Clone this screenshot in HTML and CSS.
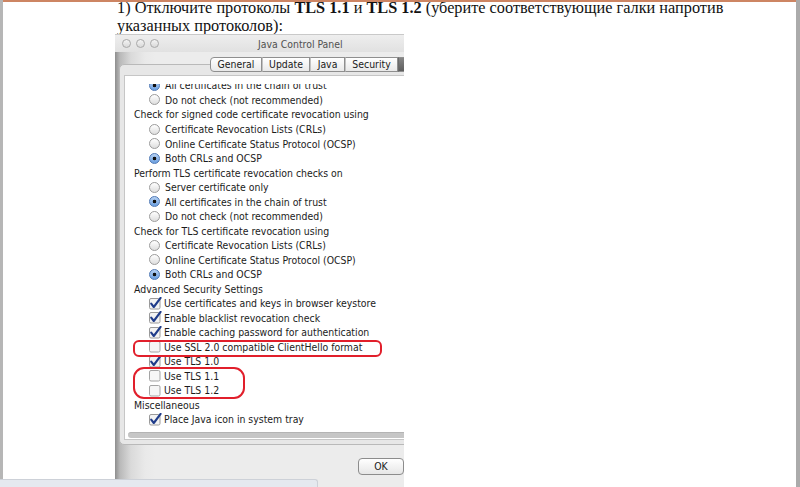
FILE: index.html
```html
<!DOCTYPE html>
<html lang="ru">
<head>
<meta charset="utf-8">
<title>Java Control Panel</title>
<link rel="stylesheet" href="styles.css">
</head>
<body>
<svg class="defs" width="0" height="0" aria-hidden="true">
  <symbol id="cb-on" viewBox="0 0 13 13">
    <rect x="0.5" y="1.5" width="10.5" height="10.5" rx="1.5" fill="#f3f3f3" stroke="#9a9a9a"/>
    <path d="M2.2 6.6 L4.8 10 L11.6 0.9" fill="none" stroke="#1f3c8a" stroke-width="2.1" stroke-linecap="round" stroke-linejoin="round"/>
  </symbol>
  <symbol id="cb-off" viewBox="0 0 13 13">
    <rect x="0.5" y="1.5" width="10.5" height="10.5" rx="1.5" fill="#f6f6f6" stroke="#a4a4a4"/>
  </symbol>
</svg>
<div class="frame">
  <p class="step">1) Отключите протоколы <b>TLS 1.1</b> и <b>TLS 1.2</b> (уберите соответствующие галки напротив указанных протоколов):</p>
  <div class="shot">
    <div class="titlebar">
      <span class="light"></span><span class="light"></span><span class="light"></span>
      <span class="wtitle">Java Control Panel</span>
    </div>
    <div class="tabs">
      <span class="tab t-general">General</span>
      <span class="tab t-update">Update</span>
      <span class="tab t-java">Java</span>
      <span class="tab t-security">Security</span>
      <span class="tab t-adv"></span>
    </div>
    <div class="panel">
      <div class="scroll">
        <div class="viewport">
          <div class="list">
            <div class="row opt"><span class="rb on"></span>All certificates in the chain of trust</div>
            <div class="row opt"><span class="rb"></span>Do not check (not recommended)</div>
            <div class="row hdr">Check for signed code certificate revocation using</div>
            <div class="row opt"><span class="rb"></span>Certificate Revocation Lists (CRLs)</div>
            <div class="row opt"><span class="rb"></span>Online Certificate Status Protocol (OCSP)</div>
            <div class="row opt"><span class="rb on"></span>Both CRLs and OCSP</div>
            <div class="row hdr">Perform TLS certificate revocation checks on</div>
            <div class="row opt"><span class="rb"></span>Server certificate only</div>
            <div class="row opt"><span class="rb on"></span>All certificates in the chain of trust</div>
            <div class="row opt"><span class="rb"></span>Do not check (not recommended)</div>
            <div class="row hdr">Check for TLS certificate revocation using</div>
            <div class="row opt"><span class="rb"></span>Certificate Revocation Lists (CRLs)</div>
            <div class="row opt"><span class="rb"></span>Online Certificate Status Protocol (OCSP)</div>
            <div class="row opt"><span class="rb on"></span>Both CRLs and OCSP</div>
            <div class="row hdr">Advanced Security Settings</div>
            <div class="row opt"><svg class="cb"><use href="#cb-on"/></svg>Use certificates and keys in browser keystore</div>
            <div class="row opt"><svg class="cb"><use href="#cb-on"/></svg>Enable blacklist revocation check</div>
            <div class="row opt"><svg class="cb"><use href="#cb-on"/></svg>Enable caching password for authentication</div>
            <div class="row opt"><svg class="cb"><use href="#cb-off"/></svg>Use SSL 2.0 compatible ClientHello format</div>
            <div class="row opt"><svg class="cb"><use href="#cb-on"/></svg>Use TLS 1.0</div>
            <div class="row opt"><svg class="cb"><use href="#cb-off"/></svg>Use TLS 1.1</div>
            <div class="row opt"><svg class="cb"><use href="#cb-off"/></svg>Use TLS 1.2</div>
            <div class="row hdr">Miscellaneous</div>
            <div class="row opt"><svg class="cb"><use href="#cb-on"/></svg>Place Java icon in system tray</div>
          </div>
        </div>
        <div class="hbar"></div>
      </div>
    </div>
    <div class="footer"><span class="okbtn">OK</span></div>
    <div class="mark mark-ssl"></div>
    <div class="mark mark-tls"></div>
  </div>
</div>
<div class="status"></div>
</body>
</html>
```
FILE: styles.css
```css
html, body {
  margin: 0;
  padding: 0;
  background: #ffffff;
}

.defs {
  position: absolute;
  width: 0;
  height: 0;
  overflow: hidden;
}

.frame {
  position: relative;
  width: 800px;
  height: 487px;
  box-sizing: border-box;
  border-left: 3px solid #b6b6b6;
  border-right: 4px solid #ababab;
  padding-left: 112px;
  overflow: hidden;
}

/* thin orange line along the top of the page (overlay) */
.frame::before {
  content: "";
  position: absolute;
  left: -3px;
  right: -4px;
  top: 0;
  height: 2px;
  background: #cd8563;
}

.step {
  margin: -1.5px 0 -2.1px 2px;
  width: 640px;
  font-family: "Liberation Serif", "Times New Roman", serif;
  font-size: 16.3px;
  line-height: 18.8px;
  color: #111111;
}

.step b {
  font-weight: bold;
}

/* ---------- screenshot of the Mac window ---------- */
.shot {
  position: relative;
  width: 289px;
  height: 453px;
  overflow: hidden;
  background: linear-gradient(90deg, #8e8e8e 0, #b9b9b9 5px, #dadada 16px, #e9e9e9 30px, #ececec 40px);
  font-family: "DejaVu Sans Condensed", "DejaVu Sans", sans-serif;
  font-stretch: condensed;
  color: #1b1b1b;
}

.titlebar {
  height: 18px;
  box-sizing: border-box;
  border-top: 1px solid #c9c9c9;
  background: linear-gradient(#eeeeee, #e1e1e1);
  display: flex;
  align-items: center;
  gap: 5px;
  padding-left: 7px;
}

.light {
  width: 9px;
  height: 9px;
  box-sizing: border-box;
  border-radius: 50%;
  border: 1px solid #a9a9a9;
  background: linear-gradient(#f4f4f4, #d9d9d9);
}

.wtitle {
  margin-left: 94px;
  font-size: 10.4px;
  color: #505050;
  white-space: nowrap;
}

.tabs {
  position: relative;
  z-index: 1;
  display: flex;
  margin: 5px 0 0 95px;
  height: 15px;
}

.tab {
  box-sizing: border-box;
  height: 15px;
  border: 1px solid #8f8f8f;
  border-left: 1px solid #c2c2c2;
  background: linear-gradient(#ffffff, #e9e9e9);
  font-size: 10.4px;
  line-height: 13px;
  text-align: center;
  color: #1a1a1a;
  white-space: nowrap;
  flex: none;
}

.t-general {
  width: 52px;
  border-left: 1px solid #8f8f8f;
  border-radius: 4px 0 0 4px;
}
.t-update { width: 48px; }
.t-java { width: 35px; }
.t-security { width: 53px; }
.t-adv {
  width: 30px;
  border-left: 1px solid #6a6a6a;
  background: linear-gradient(#858585, #5e5e5e);
}

.panel {
  margin: -8px 0 0 4px;
  width: 340px;
  box-sizing: border-box;
  border: 1px solid #b9b9b9;
  border-radius: 5px;
  background: #e7e7e7;
  padding: 10px 0 4px 4px;
}

.scroll {
  background: #ffffff;
  border: 1px solid #c6c6c6;
  padding: 8px 0 1px 0;
}

.viewport {
  height: 346px;
  overflow: hidden;
}

.list {
  margin-top: -5.8px;
}

.row {
  height: 14.52px;
  display: flex;
  align-items: center;
  white-space: nowrap;
  font-size: 10.4px;
  color: #1b1b1b;
}

.hdr {
  padding-left: 9px;
}

.opt {
  padding-left: 24px;
}

.rb {
  flex: none;
  width: 11px;
  height: 11px;
  box-sizing: border-box;
  border-radius: 50%;
  border: 1px solid #9c9c9c;
  background: linear-gradient(#ffffff, #dedede);
  margin-right: 5px;
}

.rb.on {
  border-color: #4f79b6;
  background:
    radial-gradient(circle, #111111 0 1.5px, transparent 2.1px),
    linear-gradient(#b6d1f3, #6b9fe0);
}

.cb {
  flex: none;
  width: 13px;
  height: 13px;
  margin-right: 2px;
}

.hbar {
  margin: 2px 0 0 3px;
  height: 6px;
  border-radius: 3px;
  background: #c6c6c6;
  border-top: 1px solid #b4b4b4;
  box-sizing: border-box;
}

.footer {
  display: flex;
  padding: 13px 0 0 243px;
}

.okbtn {
  width: 46px;
  height: 17px;
  box-sizing: border-box;
  border: 1px solid #8c8c8c;
  border-radius: 4px;
  background: linear-gradient(#ffffff, #e6e6e6);
  font-size: 10.4px;
  line-height: 15px;
  text-align: center;
  color: #1a1a1a;
}

/* red annotation marks drawn over the screenshot */
.mark {
  position: absolute;
  box-sizing: border-box;
  border: 2.6px solid #e11f2b;
}

.mark-ssl {
  left: 18px;
  top: 306px;
  width: 249px;
  height: 17px;
  border-radius: 6px;
}

.mark-tls {
  left: 18px;
  top: 333px;
  width: 112px;
  height: 32px;
  border-radius: 11px;
}

/* browser status bubble */
.status {
  position: absolute;
  left: 0;
  top: 479px;
  width: 318px;
  height: 8px;
  box-sizing: border-box;
  background: #e5e9ef;
  border-top: 1px solid #cdd1d8;
  border-right: 1px solid #cdd1d8;
  border-top-right-radius: 3px;
}
```
